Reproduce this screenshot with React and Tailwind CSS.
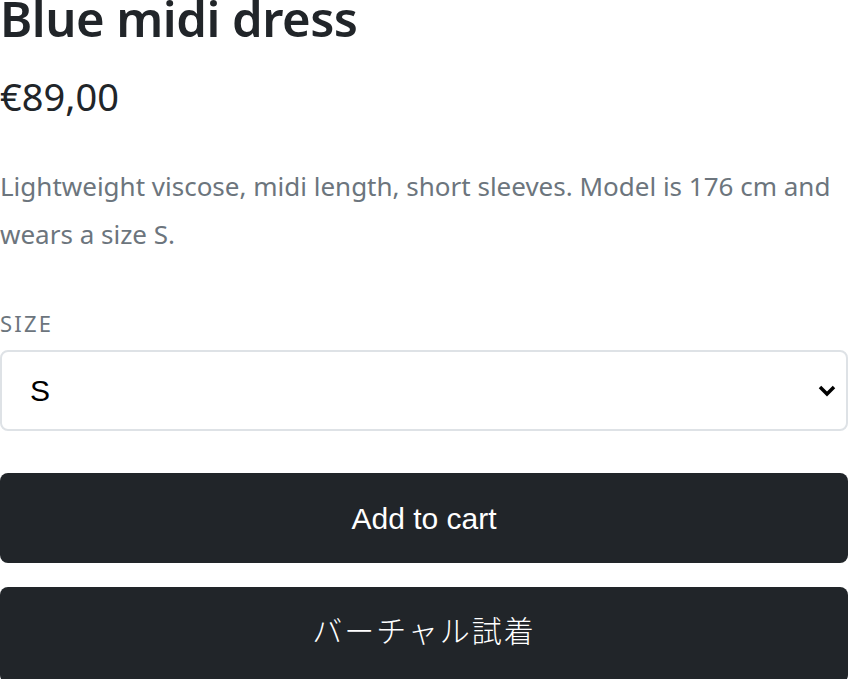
import React from "react";

export default function App() {
  return (
    <div className="w-[848px] h-[679px] overflow-hidden bg-white" style={{ fontFamily: '"Noto Sans", "Noto Sans CJK JP", sans-serif' }}>
      <h1 className="-mt-[11px] text-[49px] leading-[1.2] tracking-[-0.5px] font-semibold text-[#212529]">Blue midi dress</h1>
      <div className="mt-[26px] text-[38px] leading-[1.2] text-[#212529]">€89,00</div>
      <p className="mt-[43px] text-[26px] leading-[48px] text-[#6c757d]">
        Lightweight viscose, midi length, short sleeves. Model is 176 cm and wears a size S.
      </p>
      <div className="mt-[49px] text-[22px] tracking-[0.1em] uppercase text-[#6c757d] leading-[1.5]">Size</div>
      <div className="relative mt-[10px] h-[81px] rounded-[8px] border-2 border-[#dee2e6] flex items-center pl-[28px]" style={{ fontFamily: '"Liberation Sans", Arial, sans-serif' }}>
        <span className="text-[30px] text-black">S</span>
        <svg className="absolute right-[10px] top-1/2 -translate-y-1/2" width="18" height="12" viewBox="0 0 18 12">
          <path d="M2 2 L9 9 L16 2" stroke="black" strokeWidth="3.5" fill="none" />
        </svg>
      </div>
      <button className="mt-[42px] w-full h-[90px] rounded-[8px] bg-[#212529] text-white text-[30px] flex items-center justify-center" style={{ fontFamily: '"Liberation Sans", Arial, "Noto Sans CJK JP", sans-serif' }}>
        Add to cart
      </button>
      <button className="mt-[24px] w-full h-[96px] rounded-[8px] bg-[#212529] text-white text-[30px] tracking-[2px] font-light flex items-center justify-center pb-[12px]" style={{ fontFamily: '"Noto Sans CJK JP", sans-serif' }}>
        バーチャル試着
      </button>
    </div>
  );
}
